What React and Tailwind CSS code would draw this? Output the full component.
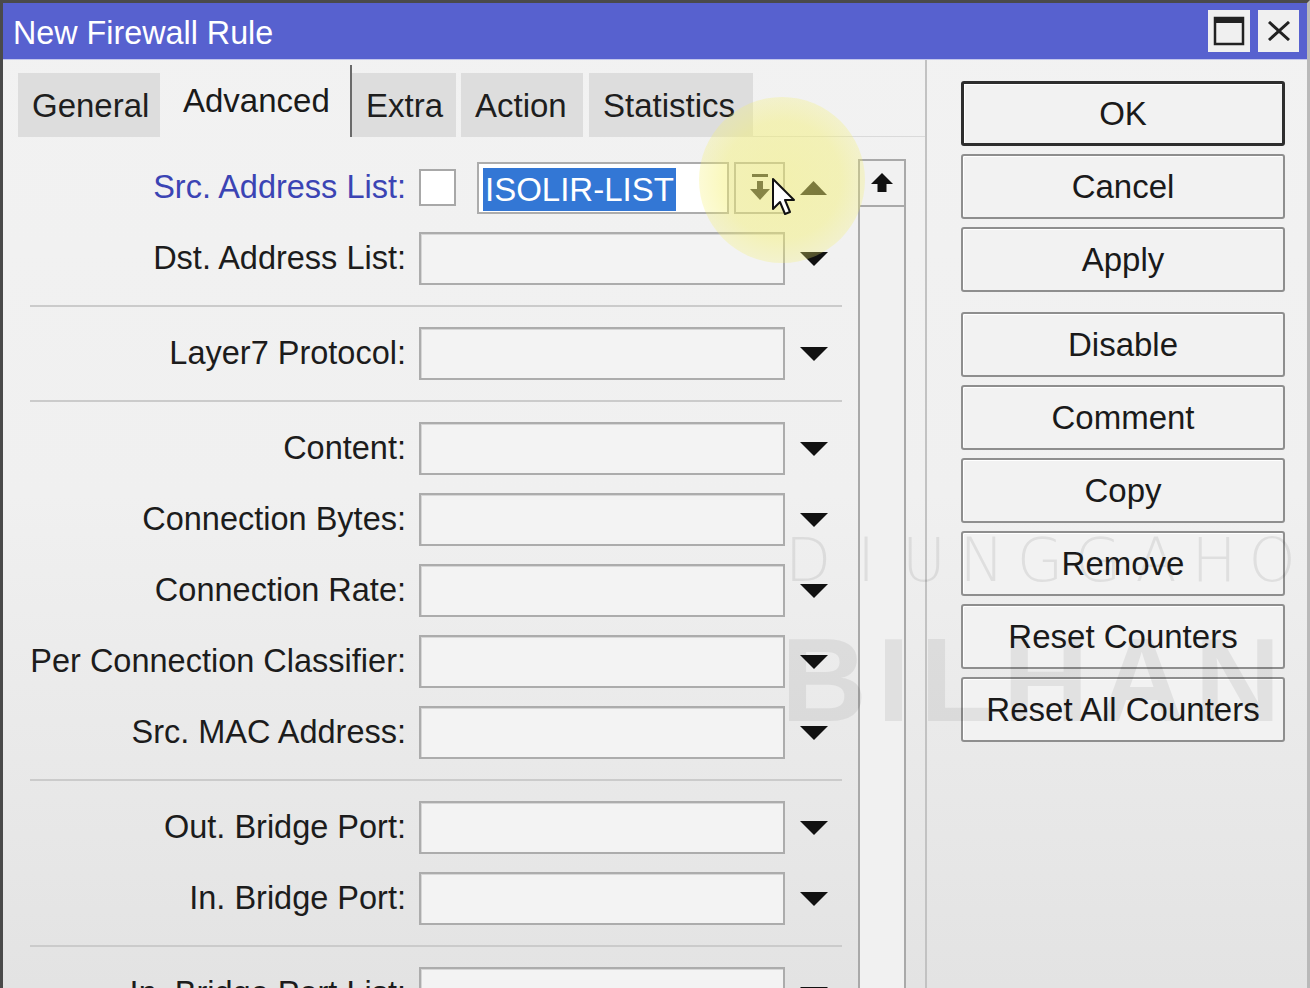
import React from "react";

const rows = [
  { type: "src" },
  { label: "Dst. Address List:" },
  { type: "sep" },
  { label: "Layer7 Protocol:" },
  { type: "sep" },
  { label: "Content:" },
  { label: "Connection Bytes:" },
  { label: "Connection Rate:" },
  { label: "Per Connection Classifier:" },
  { label: "Src. MAC Address:" },
  { type: "sep" },
  { label: "Out. Bridge Port:" },
  { label: "In. Bridge Port:" },
  { type: "sep" },
  { label: "In. Bridge Port List:" },
];

const buttons = [
  ["OK", true],
  ["Cancel"],
  ["Apply"],
  ["Disable", false, true],
  ["Comment"],
  ["Copy"],
  ["Remove"],
  ["Reset Counters"],
  ["Reset All Counters"],
];

const tabs = [
  { name: "General", w: "w-[142px]", ml: "ml-[15px]" },
  { name: "Advanced", w: "w-[187px]", ml: "ml-[5px]", active: true },
  { name: "Extra", w: "w-[104px]", ml: "ml-0" },
  { name: "Action", w: "w-[122px]", ml: "ml-[5px]" },
  { name: "Statistics", w: "w-[164px]", ml: "ml-[6px]" },
];

const DownArrow = () => (
  <svg width="28" height="14" viewBox="0 0 28 14">
    <polygon points="0,0 28,0 14,14" fill="#111" />
  </svg>
);

const UpArrow = () => (
  <svg width="27" height="14" viewBox="0 0 27 14">
    <polygon points="0,14 27,14 13.5,0" fill="#111" />
  </svg>
);

const FieldRow = ({ label }) => (
  <div className="flex items-center h-[71px]">
    <div className="w-[403px] text-right text-[32.5px] leading-none text-[#1c1c1c] whitespace-nowrap">
      {label}
    </div>
    <div className="ml-[13px] w-[366px] h-[53px] border-2 border-[#acacac] bg-[#f3f3f3] shadow-[inset_1px_1px_0_#d6d6d6]" />
    <div className="w-[57px] flex justify-center">
      <DownArrow />
    </div>
  </div>
);

const SrcRow = () => (
  <div className="flex items-center h-[71px]">
    <div className="w-[403px] text-right text-[32.5px] leading-none text-[#3b44b4] whitespace-nowrap">
      Src. Address List:
    </div>
    <div className="ml-[13px] w-[37px] h-[37px] border-2 border-[#a8a8a8] bg-white" />
    <div className="ml-[21px] w-[252px] h-[52px] border-2 border-[#acacac] bg-white pl-[4px] pt-[4px]">
      <span className="inline-block bg-[#3377d5] text-white text-[33px] leading-[43px] px-[2px]">
        ISOLIR-LIST
      </span>
    </div>
    <div className="ml-[5px] w-[51px] h-[52px] border-2 border-[#acacac] bg-[#f1f1f1] flex items-center justify-center">
      <svg width="22" height="30" viewBox="0 0 22 30">
        <rect x="3" y="1" width="16" height="3" fill="#222" />
        <rect x="8" y="8" width="6" height="9" fill="#222" />
        <polygon points="1,16 21,16 11,27" fill="#222" />
      </svg>
    </div>
    <div className="w-[57px] flex justify-center">
      <UpArrow />
    </div>
  </div>
);

const Separator = () => (
  <div className="h-[24px] flex items-center">
    <div className="ml-[27px] w-[812px] h-[2px] bg-[#cbcbcb]" />
  </div>
);

const App = () => {
  return (
    <div className="relative w-[1310px] h-[988px] overflow-hidden font-['Liberation_Sans',Arial,sans-serif] bg-gradient-to-b from-[#f2f2f2] via-[#f0f0f0] to-[#e3e3e3] border-t-[3px] border-t-[#4a4a4a] border-l-[3px] border-l-[#4a4a4a] border-r-[3px] border-r-[#b9b9b9]">
      {/* title bar */}
      <div className="h-[57px] bg-[#5761cf] border-b border-[#c3c6ec] flex items-center pl-[10px] pr-[8px]">
        <div className="text-white text-[32.3px] leading-none pt-[5px]">
          New Firewall Rule
        </div>
        <div className="ml-auto flex gap-[8px] self-start mt-[7px]">
          <div className="w-[42px] h-[42px] bg-[#f0f0f0] flex items-center justify-center">
            <svg width="32" height="30" viewBox="0 0 32 30">
              <rect x="2" y="2" width="28" height="26" fill="none" stroke="#222" strokeWidth="2.5" />
              <rect x="2" y="2" width="28" height="5" fill="#222" />
            </svg>
          </div>
          <div className="w-[41px] h-[42px] bg-[#f0f0f0] flex items-center justify-center">
            <svg width="24" height="20" viewBox="0 0 24 20">
              <path d="M2 1 L22 19 M22 1 L2 19" stroke="#222" strokeWidth="3" />
            </svg>
          </div>
        </div>
      </div>

      <div className="flex">
        {/* left: tabs + form */}
        <div className="w-[924px] border-r-2 border-[#c2c2c2] h-[930px]">
          <div className="h-[77px] flex items-end">
            {tabs.map((t) =>
              t.active ? (
                <div
                  key={t.name}
                  className={`${t.w} ${t.ml} h-[72px] border-r-2 border-[#6a6a6a] flex items-center pl-[18px] pb-[2px] text-[33px] leading-none text-[#1a1a1a]`}
                >
                  {t.name}
                </div>
              ) : (
                <div
                  key={t.name}
                  className={`${t.w} ${t.ml} h-[64px] bg-[#dddddd] flex items-center pl-[14px] text-[33px] leading-none text-[#1e1e1e]`}
                >
                  {t.name}
                </div>
              )
            )}
            <div className="flex-1 h-[1px] bg-[#dadada]" />
          </div>

          <div className="flex">
            <div className="w-[842px] pt-[15px]">
              {rows.map((r, i) =>
                r.type === "sep" ? (
                  <Separator key={i} />
                ) : r.type === "src" ? (
                  <SrcRow key={i} />
                ) : (
                  <FieldRow key={i} label={r.label} />
                )
              )}
            </div>
            <div className="ml-[13px] mt-[22px] w-[48px] h-[900px] border-2 border-[#a9a9a9] bg-[#f1f1f1]">
              <div className="h-[46px] border-b-2 border-[#a9a9a9] flex items-center justify-center">
                <svg width="22" height="20" viewBox="0 0 22 20">
                  <polygon points="0,11 22,11 11,0" fill="#111" />
                  <rect x="6.5" y="10" width="9" height="9" fill="#111" />
                </svg>
              </div>
            </div>
          </div>
        </div>

        {/* right: buttons */}
        <div className="ml-[34px] mt-[21px] w-[324px] flex flex-col">
          {buttons.map(([name, isDefault, gapBefore]) => (
            <div
              key={name}
              className={`h-[65px] flex items-center justify-center text-[33px] leading-none text-[#1a1a1a] bg-[#f2f2f2] rounded-[3px] shadow-[inset_1px_1px_0_#ffffff] ${
                isDefault ? "border-[3px] border-[#2e2e2e]" : "border-2 border-[#8e8e8e]"
              } ${gapBefore ? "mt-[20px]" : name === "OK" ? "" : "mt-[8px]"}`}
            >
              {name}
            </div>
          ))}
        </div>
      </div>

      {/* watermark */}
      <div className="absolute left-[776px] top-[527px] flex pointer-events-none font-['DejaVu_Sans',sans-serif] font-extralight text-[60px] leading-none text-[rgba(0,0,0,0.08)]">
        {["D", "I", "U", "N", "G", "G", "A", "H", "O"].map((c, i) => (
          <span key={i} className="w-[58px] text-center">
            {c}
          </span>
        ))}
      </div>
      <div className="absolute left-[778px] top-[617px] pointer-events-none font-['Liberation_Sans',sans-serif] font-bold text-[119px] leading-none tracking-[10px] text-[rgba(0,0,0,0.065)]">
        BILHAN
      </div>

      {/* cursor highlight */}
      <div className="absolute left-[696px] top-[94px] w-[166px] h-[166px] rounded-full pointer-events-none bg-[radial-gradient(circle,rgba(244,240,110,0.5)_0%,rgba(244,240,110,0.45)_50%,rgba(244,240,110,0.22)_78%,rgba(244,240,110,0)_100%)]" />
      <svg
        className="absolute left-[768px] top-[174px] pointer-events-none"
        width="26"
        height="42"
        viewBox="0 0 26 42"
      >
        <path
          d="M2 2 L2 32 L9 25 L14 37 L19 35 L14 23 L23 23 Z"
          fill="#fff"
          stroke="#111"
          strokeWidth="2"
          strokeLinejoin="round"
        />
      </svg>
    </div>
  );
};

export default App;
